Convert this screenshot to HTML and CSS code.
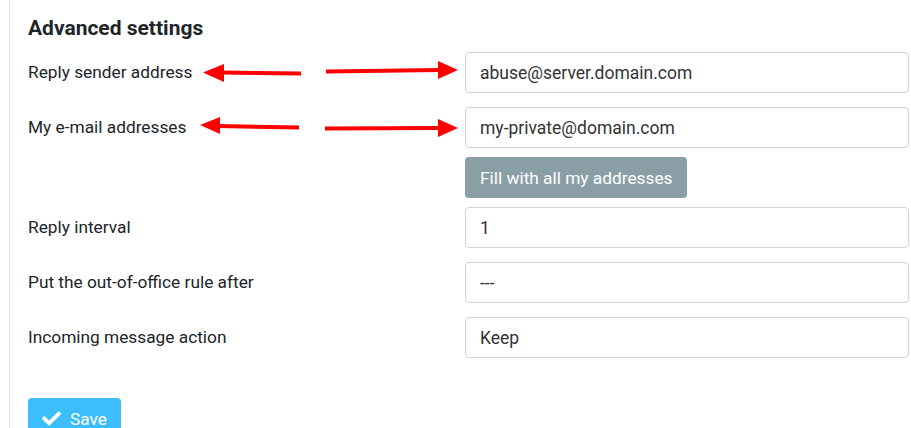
FILE: index.html
```html
<!DOCTYPE html>
<html lang="en">
<head>
    <meta charset="UTF-8">
    <title>Out of office - Advanced settings</title>
    <link rel="stylesheet" href="styles.css">
</head>
<body>
    <main class="panel">
        <h2 class="section-title">Advanced settings</h2>

        <form class="settings">
            <div class="row">
                <label class="row-label" for="sender">Reply sender address</label>
                <div class="row-field">
                    <input class="form-control" id="sender" type="text" value="abuse@server.domain.com">
                </div>
            </div>

            <div class="row row-tight">
                <label class="row-label" for="addresses">My e-mail addresses</label>
                <div class="row-field">
                    <input class="form-control" id="addresses" type="text" value="my-private@domain.com">
                    <button type="button" class="btn btn-secondary">Fill with all my addresses</button>
                </div>
            </div>

            <div class="row">
                <label class="row-label" for="interval">Reply interval</label>
                <div class="row-field">
                    <input class="form-control" id="interval" type="text" value="1">
                </div>
            </div>

            <div class="row">
                <label class="row-label" for="after">Put the out-of-office rule after</label>
                <div class="row-field">
                    <div class="form-control select" id="after">---</div>
                </div>
            </div>

            <div class="row">
                <label class="row-label" for="action">Incoming message action</label>
                <div class="row-field">
                    <div class="form-control select" id="action">Keep</div>
                </div>
            </div>

            <div class="actions">
                <button type="submit" class="btn btn-primary">
                    <svg class="btn-icon" viewBox="0 0 512 512"><path d="M173.9 439.4l-166.4-166.4c-10-10-10-26.2 0-36.2l36.2-36.2c10-10 26.2-10 36.2 0L192 312.7 432.1 72.6c10-10 26.2-10 36.2 0l36.2 36.2c10 10 10 26.2 0 36.2l-294.4 294.4c-10 10-26.2 10-36.2 0z"/></svg>
                    Save
                </button>
            </div>
        </form>
    </main>

    <!-- red annotation arrows drawn over the form -->
    <svg class="annotations" width="911" height="428" viewBox="0 0 911 428">
        <g fill="#ff0000" stroke="#ff0000">
            <line x1="221" y1="72.5" x2="301" y2="73.5" stroke-width="4"/>
            <polygon points="203,72.5 224,64 224,82" stroke="none"/>
            <line x1="326" y1="71.5" x2="440" y2="70" stroke-width="4"/>
            <polygon points="458,70 438,61 438,79" stroke="none"/>

            <line x1="217" y1="126" x2="299" y2="127.5" stroke-width="4"/>
            <polygon points="200,125 220,117 220,134" stroke="none"/>
            <line x1="325" y1="128.5" x2="440" y2="128" stroke-width="4"/>
            <polygon points="458,128 438,119 438,137" stroke="none"/>
        </g>
    </svg>
</body>
</html>
```

FILE: styles.css
```css
:root {
    --font-main: Roboto, "Liberation Sans", sans-serif;
    --color-text: #212529;
    --color-border: #ced4da;
    --color-line: #dcdcdc;
    --color-secondary: #8a9ea5;
    --color-primary: #3cbefc;
}

body {
    margin: 0;
    font-family: var(--font-main);
    font-size: 17.3px;
    color: var(--color-text);
    background: #fff;
    overflow: hidden;
    height: 428px;
}

/* panel with the thin line on the left */
.panel {
    margin-left: 9px;
    padding: 16px 0 0 18px;
    border-left: 1px solid var(--color-line);
    width: 900px;
    min-height: 428px;
    box-sizing: border-box;
}

.section-title {
    margin: 0 0 12px;
    font-size: 21px;
    font-weight: 700;
    line-height: 24px;
}

/* form rows: label on the left, field on the right */
.row {
    display: grid;
    grid-template-columns: 437px 1fr;
    margin-bottom: 14px;
}

.row-tight { margin-bottom: 9px; }

.row-label {
    padding-top: 8px;
    line-height: 24px;
}

.row-field {
    display: flex;
    flex-direction: column;
    align-items: flex-start;
    gap: 9px;
}

.form-control {
    display: block;
    box-sizing: border-box;
    width: 100%;
    height: 41px;
    padding: 0 14px;
    font-family: var(--font-main);
    font-size: 17.5px;
    color: #333;
    background: #fff;
    border: 1px solid var(--color-border);
    border-radius: 4px;
    outline: none;
}

.select {
    display: flex;
    align-items: center;
}

.btn {
    display: inline-flex;
    align-items: center;
    box-sizing: border-box;
    height: 41px;
    padding: 0 15px;
    font-family: var(--font-main);
    font-size: 17.3px;
    color: #fff;
    border: none;
    border-radius: 4px;
    cursor: pointer;
}

.btn-secondary { background: var(--color-secondary); }

.btn-primary {
    background: var(--color-primary);
    padding: 0 14px;
    gap: 9px;
}

.btn-icon { width: 19px; height: 19px; fill: #fff; }

.actions { margin-top: 40px; }

.annotations {
    position: absolute;
    top: 0;
    left: 0;
    pointer-events: none;
}
```
